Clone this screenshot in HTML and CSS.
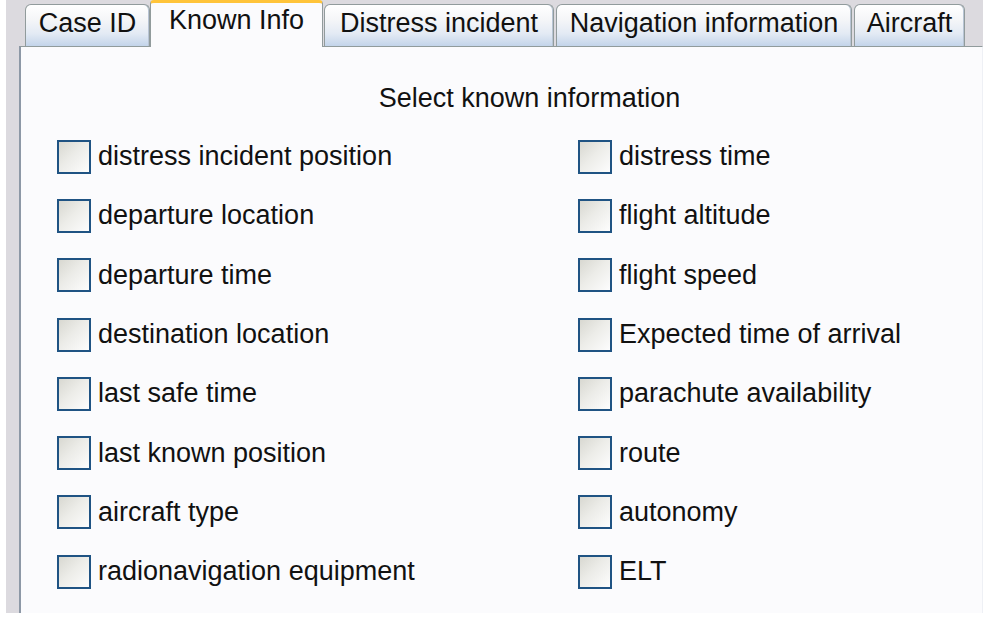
FILE: index.html
```html
<!DOCTYPE html>
<html>
<head>
<meta charset="utf-8">
<link rel="stylesheet" href="styles.css">
</head>
<body>
<div class="window">
  <div class="tabs">
    <div class="tab w-case">Case ID</div>
    <div class="tab tab-active w-known">Known Info</div>
    <div class="tab w-distress">Distress incident</div>
    <div class="tab w-nav">Navigation information</div>
    <div class="tab w-air">Aircraft</div>
  </div>
  <div class="panel">
    <div class="heading">Select known information</div>
    <div class="grid">
      <label class="item"><span class="box"></span><span>distress incident position</span></label>
      <label class="item"><span class="box"></span><span>distress time</span></label>
      <label class="item"><span class="box"></span><span>departure location</span></label>
      <label class="item"><span class="box"></span><span>flight altitude</span></label>
      <label class="item"><span class="box"></span><span>departure time</span></label>
      <label class="item"><span class="box"></span><span>flight speed</span></label>
      <label class="item"><span class="box"></span><span>destination location</span></label>
      <label class="item"><span class="box"></span><span>Expected time of arrival</span></label>
      <label class="item"><span class="box"></span><span>last safe time</span></label>
      <label class="item"><span class="box"></span><span>parachute availability</span></label>
      <label class="item"><span class="box"></span><span>last known position</span></label>
      <label class="item"><span class="box"></span><span>route</span></label>
      <label class="item"><span class="box"></span><span>aircraft type</span></label>
      <label class="item"><span class="box"></span><span>autonomy</span></label>
      <label class="item"><span class="box"></span><span>radionavigation equipment</span></label>
      <label class="item"><span class="box"></span><span>ELT</span></label>
    </div>
  </div>
</div>
</body>
</html>
```

FILE: styles.css
```css
html, body {
  margin: 0;
  padding: 0;
  background: #ffffff;
}

body {
  font-family: "Liberation Sans", Arial, sans-serif;
  font-size: 27px;
  color: #111111;
}

.window {
  margin-left: 6px;
  width: 977px;
  height: 613px;
  box-sizing: border-box;
  padding-left: 13px;
  background: #dcdadf;
  display: flex;
  flex-direction: column;
}

.tabs {
  height: 46px;
  flex: none;
  display: flex;
  align-items: flex-end;
  gap: 2px;
  padding-left: 6px;
}

.tab {
  box-sizing: border-box;
  height: 42px;
  padding-bottom: 5px;
  display: flex;
  align-items: center;
  justify-content: center;
  white-space: nowrap;
  border: 1px solid #919b9c;
  border-bottom: none;
  border-radius: 6px 6px 0 0;
  background: linear-gradient(#ffffff 0%, #f5f6f8 35%, #e3eaf4 70%, #c3d4ea 100%);
  box-shadow: inset -1px 0 0 #b8c4d4;
}

.tab-active {
  height: 47px;
  margin-bottom: -1px;
  padding-bottom: 9px;
  position: relative;
  z-index: 1;
  background: #fbfbfd;
  border-top: 3px solid #ffc43a;
  border-radius: 4px 4px 0 0;
  box-shadow: none;
  border-left-color: #919b9c;
  border-right-color: #919b9c;
}

.w-case { width: 125px; }
.w-known { width: 173px; margin-left: -2px; margin-right: -1px; }
.w-distress { width: 230px; }
.w-nav { width: 296px; }
.w-air { width: 111px; }

.panel {
  flex: 1;
  background: #fbfbfd;
  border-top: 1px solid #919b9c;
  border-left: 2px solid #8d98a6;
  border-right: 1px solid #eef0f5;
  padding-top: 35px;
}

.heading {
  height: 32px;
  line-height: 32px;
  text-align: center;
  padding-left: 56px;
}

.grid {
  margin-top: 13px;
  padding-left: 36px;
  display: grid;
  grid-template-columns: 521px 1fr;
  grid-auto-rows: 59.3px;
}

.item {
  display: flex;
  align-items: center;
  gap: 7px;
  white-space: nowrap;
}

.box {
  flex: none;
  width: 34px;
  height: 34px;
  box-sizing: border-box;
  border: 2px solid #1f5383;
  background: linear-gradient(135deg, #d8d8d1 0%, #ecece8 45%, #fdfdfd 100%);
}
```
